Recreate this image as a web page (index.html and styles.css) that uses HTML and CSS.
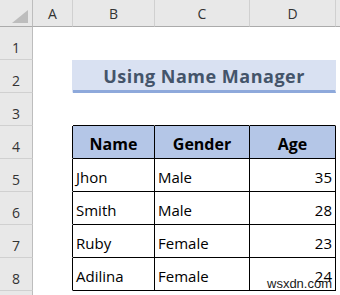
FILE: index.html
```html
<!DOCTYPE html>
<html>
<head>
<meta charset="utf-8">
<link rel="stylesheet" href="styles.css">
</head>
<body>
<div class="sheet">
  <div class="corner"><svg width="32" height="26" viewBox="0 0 32 26"><polygon points="28,10 28,23 12,23" fill="#bdbdbd"/></svg></div>
  <div class="colh">A</div>
  <div class="colh">B</div>
  <div class="colh">C</div>
  <div class="colh">D</div>
  <div class="colh colh-e"></div>

  <div class="rowh">1</div>
  <div class="c"></div><div class="c"></div><div class="c"></div><div class="c"></div><div class="c last"></div>

  <div class="rowh">2</div>
  <div class="c c-title-left"></div>
  <div class="c title">Using Name Manager</div>
  <div class="c last"></div>

  <div class="rowh">3</div>
  <div class="c"></div><div class="c top"></div><div class="c top"></div><div class="c top"></div><div class="c last"></div>

  <div class="rowh">4</div>
  <div class="c left"></div>
  <div class="c cell th">Name</div>
  <div class="c cell th">Gender</div>
  <div class="c cell th">Age</div>
  <div class="c last"></div>

  <div class="rowh">5</div>
  <div class="c left"></div>
  <div class="c cell">Jhon</div>
  <div class="c cell">Male</div>
  <div class="c cell num">35</div>
  <div class="c last"></div>

  <div class="rowh">6</div>
  <div class="c left"></div>
  <div class="c cell">Smith</div>
  <div class="c cell">Male</div>
  <div class="c cell num">28</div>
  <div class="c last"></div>

  <div class="rowh">7</div>
  <div class="c left"></div>
  <div class="c cell">Ruby</div>
  <div class="c cell">Female</div>
  <div class="c cell num">23</div>
  <div class="c last"></div>

  <div class="rowh">8</div>
  <div class="c left"></div>
  <div class="c cell">Adilina</div>
  <div class="c cell">Female</div>
  <div class="c cell num">24</div>
  <div class="c last"></div>

  <div class="rowh rowh-partial"></div>
  <div class="c"></div><div class="c"></div><div class="c"></div><div class="c"></div><div class="c last"></div>
</div>
<div class="watermark">wsxdn.com</div>
</body>
</html>
```
FILE: styles.css
```css
html, body {
  margin: 0;
  padding: 0;
  background: #ffffff;
  overflow: hidden;
}
body {
  width: 340px;
  height: 295px;
  position: relative;
  font-family: "Open Sans", "Liberation Sans", sans-serif;
}
.sheet {
  display: grid;
  grid-template-columns: 33px 40px 82px 95px 86px 4px;
  grid-template-rows: 27px repeat(8, 33px) 4px;
}
.sheet > div {
  box-sizing: border-box;
}
.corner {
  background: #e8e8e8;
  border-right: 1px solid #bdbdbd;
  border-bottom: 1px solid #ababab;
}
.corner svg { display: block; }
.colh {
  background: #e8e8e8;
  border-right: 1px solid #d0d0d0;
  border-bottom: 1px solid #ababab;
  color: #333333;
  font-size: 14px;
  display: flex;
  align-items: center;
  justify-content: center;
  padding-top: 0;
}
.colh-e {
  border-right: none;
}
.rowh {
  background: #e8e8e8;
  border-right: 1px solid #bdbdbd;
  border-bottom: 1px solid #d0d0d0;
  color: #333333;
  font-size: 14px;
  display: flex;
  align-items: center;
  justify-content: center;
  padding-top: 8px;
}
.rowh-partial {
  border-bottom: none;
  padding-top: 0;
}
.c {
  border-right: 1px solid #ffffff;
  border-bottom: 1px solid #ffffff;
  font-size: 15px;
  color: #000000;
  display: flex;
  align-items: center;
  padding: 3px 3px 0 3px;
  white-space: nowrap;
}
.c.last { border-right: none; }
.c-title-left {
  border-right-color: #d9e1f2;
}
.title {
  grid-column: span 3;
  background: #d9e1f2;
  border-right-color: #d9e1f2;
  border-bottom: 3px solid #8ea9db;
  color: #44546a;
  font-weight: bold;
  font-size: 18px;
  letter-spacing: 0.5px;
  justify-content: center;
  padding-top: 2px;
}
.top { border-bottom-color: #000000; }
.left { border-right-color: #000000; }
.cell {
  border-right-color: #000000;
  border-bottom-color: #000000;
}
.th {
  background: #b4c6e7;
  font-weight: bold;
  font-size: 16px;
  justify-content: center;
}
.num { justify-content: flex-end; }
.watermark {
  position: absolute;
  left: 267px;
  top: 276px;
  font-family: "Liberation Sans", Arial, sans-serif;
  font-size: 13px;
  color: #1a1a1a;
  line-height: 15px;
}
```
